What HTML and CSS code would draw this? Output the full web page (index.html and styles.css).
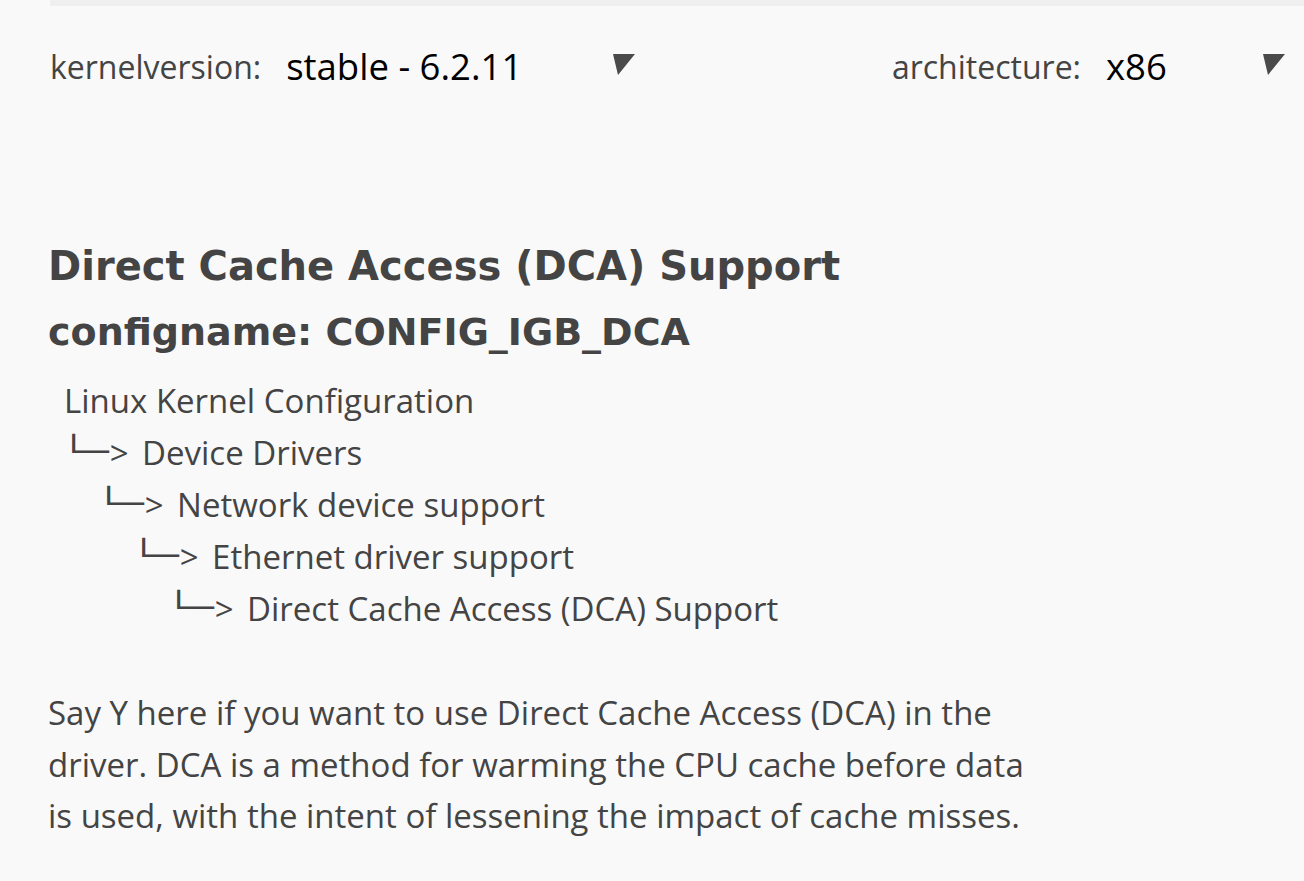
FILE: index.html
```html
<!DOCTYPE html>
<html lang="en">
<head>
<meta charset="utf-8">
<title>CONFIG_IGB_DCA</title>
<link rel="stylesheet" href="styles.css">
</head>
<body>
<div class="topbar"></div>
<main class="page">
  <div class="filters">
    <div class="filter filter-kernel">
      <span class="filter-label">kernelversion:</span>
      <div class="select select-kernel">
        <span class="select-value">stable - 6.2.11</span>
        <svg class="select-arrow" width="22" height="21" viewBox="0 0 22 21"><polygon points="0,0 22,0 5,21" fill="#4a4a4a"/></svg>
      </div>
    </div>
    <div class="filter filter-arch">
      <span class="filter-label">architecture:</span>
      <div class="select select-arch">
        <span class="select-value">x86</span>
        <svg class="select-arrow" width="22" height="21" viewBox="0 0 22 21"><polygon points="0,0 22,0 5,21" fill="#4a4a4a"/></svg>
      </div>
    </div>
  </div>

  <h1 class="title">Direct Cache Access (DCA) Support</h1>
  <h2 class="configname">configname: CONFIG_IGB_DCA</h2>

  <div class="tree">
    <div class="tree-row level-0">Linux Kernel Configuration</div>
    <div class="tree-row level-1"><span class="branch">└─</span><span class="arrow">&gt;</span> Device Drivers</div>
    <div class="tree-row level-2"><span class="branch">└─</span><span class="arrow">&gt;</span> Network device support</div>
    <div class="tree-row level-3"><span class="branch">└─</span><span class="arrow">&gt;</span> Ethernet driver support</div>
    <div class="tree-row level-4"><span class="branch">└─</span><span class="arrow">&gt;</span> Direct Cache Access (DCA) Support</div>
  </div>

  <p class="help">Say Y here if you want to use Direct Cache Access (DCA) in the driver. DCA is a method for warming the CPU cache before data is used, with the intent of lessening the impact of cache misses.</p>
</main>
</body>
</html>
```

FILE: styles.css
```css
html, body {
  margin: 0;
  padding: 0;
  background: #f9f9f9;
}
body {
  font-family: "Open Sans", "Noto Sans", sans-serif;
  color: #444444;
}
.topbar {
  height: 6px;
  margin-left: 50px;
  background: #efefef;
}
.page {
  padding: 0 0 0 48px;
}
.filters {
  display: flex;
  justify-content: space-between;
  align-items: center;
  padding: 36px 19px 0 2px;
  height: 48px;
}
.filter {
  display: flex;
  align-items: center;
  gap: 25px;
}
.filter-label {
  color: #444444;
  font-size: 32px;
}
.select {
  display: flex;
  align-items: center;
  justify-content: space-between;
  color: #000000;
  font-size: 36.5px;
}
.select-kernel { width: 349px; }
.select-arch { width: 179px; }
.select-arrow { display: block; margin-top: -3px; }
.title {
  font-family: "DejaVu Sans", Verdana, sans-serif;
  font-weight: bold;
  font-size: 40px;
  margin: 144px 0 0 0;
  line-height: 64px;
}
.configname {
  font-family: "DejaVu Sans", Verdana, sans-serif;
  font-weight: bold;
  font-size: 38px;
  margin: 0;
  line-height: 68px;
}
.tree {
  font-size: 33px;
  margin-top: 9px;
}
.tree-row {
  height: 52px;
  line-height: 52px;
  white-space: nowrap;
}
.level-0 { padding-left: 16px; }
.level-1 { padding-left: 14px; }
.level-2 { padding-left: 49px; }
.level-3 { padding-left: 84px; }
.level-4 { padding-left: 119px; }
.branch {
  display: inline-block;
  font-family: "DejaVu Sans", sans-serif;
  font-size: 30px;
  line-height: 1;
  position: relative;
  top: -3px;
  transform: scaleX(1.29);
  transform-origin: left center;
  margin-right: 10.5px;
}
.arrow {
  margin-left: 1px;
  margin-right: 5px;
}
.help {
  font-size: 33px;
  line-height: 51.5px;
  max-width: 1000px;
  margin: 52px 0 0 0;
}
```
